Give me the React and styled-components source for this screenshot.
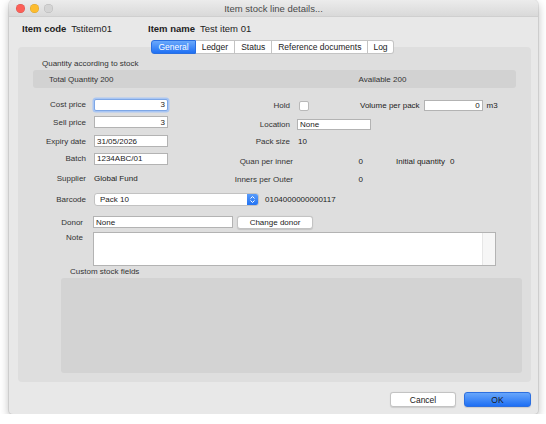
import React from "react";
import styled, { createGlobalStyle } from "styled-components";

const GlobalStyle = createGlobalStyle`
  html, body {
    margin: 0;
    padding: 0;
    background: #ffffff;
    font-family: "Liberation Sans", Arial, sans-serif;
    color: #222;
  }
`;

const Window = styled.div`
  margin-left: 9px;
  width: 529px;
  height: 414px;
  background: #e8e8e8;
  border-radius: 5px 5px 4px 4px;
  box-shadow: 0 4px 10px rgba(0, 0, 0, 0.28), 0 0 0 1px rgba(0, 0, 0, 0.08);
  display: flex;
  flex-direction: column;
  overflow: hidden;
`;

const TitleBar = styled.div`
  height: 17px;
  display: flex;
  align-items: center;
  padding-left: 7px;
  background: linear-gradient(#ececec, #d9d9d9);
  border-bottom: 1px solid #cfcfcf;
  box-sizing: border-box;
`;

const Light = styled.span`
  width: 9px;
  height: 9px;
  border-radius: 50%;
  margin-right: 5px;
  background: ${({ color }) => color};
  box-shadow: inset 0 0 0 0.5px rgba(0, 0, 0, 0.15);
`;

const Title = styled.div`
  flex: 1;
  text-align: center;
  font-size: 9.5px;
  color: #4a4a4a;
  margin-right: 49px;
`;

const Header = styled.div`
  height: 23px;
  display: flex;
  align-items: center;
  padding-left: 13px;
  font-size: 9.5px;
`;

const HeadLabel = styled.span`
  font-weight: bold;
  margin-right: 5px;
  margin-left: ${({ $ml }) => $ml || 0}px;
`;

const Panel = styled.div`
  margin: 7px 7px 0 9px;
  height: 335px;
  background: #dedede;
  border-radius: 4px;
  display: flex;
  flex-direction: column;
  font-size: 8px;
`;

const TabBar = styled.div`
  margin-top: -7px;
  display: flex;
  justify-content: center;
  padding-right: 4px;
`;

const Tab = styled.div`
  height: 14px;
  padding: 0 ${({ $pad }) => $pad}px;
  display: flex;
  align-items: center;
  font-size: 8.5px;
  color: ${({ $active }) => ($active ? "#ffffff" : "#222")};
  background: ${({ $active }) =>
    $active ? "linear-gradient(#6aa9fb, #1f70f4)" : "#ffffff"};
  border: 1px solid ${({ $active }) => ($active ? "#2a6fe0" : "#c4c4c4")};
  border-left-width: ${({ $first }) => ($first ? 1 : 0)}px;
  box-sizing: border-box;
  &:first-child {
    border-radius: 3px 0 0 3px;
  }
  &:last-child {
    border-radius: 0 3px 3px 0;
  }
`;

const SectionLabel = styled.div`
  height: 10px;
  line-height: 10px;
  margin: ${({ $mt }) => $mt}px 0 0 ${({ $ml }) => $ml}px;
  color: #333;
`;

const QtyBar = styled.div`
  margin: 1px 15px 0 15px;
  height: 18px;
  background: #d2d2d2;
  border-radius: 3px;
  display: flex;
  align-items: center;
  padding-left: 16px;
  color: #333;
`;

const Available = styled.span`
  margin-left: 245px;
`;

const FormTop = styled.div`
  display: flex;
  margin-top: 10px;
`;

const Column = styled.div`
  display: flex;
  flex-direction: column;
  padding-top: ${({ $pt }) => $pt || 0}px;
`;

const Row = styled.div`
  display: flex;
  align-items: ${({ $top }) => ($top ? "flex-start" : "center")};
  margin-top: ${({ $mt }) => $mt || 0}px;
  height: ${({ $h }) => $h || 13}px;
`;

const Label = styled.span`
  width: ${({ $w }) => $w}px;
  text-align: right;
  margin-right: ${({ $gap }) => $gap || 8}px;
  color: #333;
  flex-shrink: 0;
  padding-top: ${({ $pt }) => $pt || 0}px;
`;

const Value = styled.span`
  color: #222;
  margin-left: ${({ $ml }) => $ml || 0}px;
  width: ${({ $w }) => ($w ? `${$w}px` : "auto")};
  text-align: ${({ $right }) => ($right ? "right" : "left")};
`;

const Input = styled.div`
  width: ${({ $w }) => $w}px;
  height: ${({ $h }) => $h || 12}px;
  box-sizing: border-box;
  background: #ffffff;
  border: 1px solid ${({ $focus }) => ($focus ? "#7ea7e6" : "#b3b3b3")};
  box-shadow: ${({ $focus }) => ($focus ? "0 0 0 1.5px #a9c6f3" : "none")};
  border-radius: ${({ $focus }) => ($focus ? 2 : 0)}px;
  display: flex;
  align-items: center;
  justify-content: ${({ $right }) => ($right ? "flex-end" : "flex-start")};
  padding: 0 2px;
  color: #1a1a1a;
  margin-left: ${({ $ml }) => $ml || 0}px;
`;

const Check = styled.div`
  width: 10px;
  height: 10px;
  box-sizing: border-box;
  background: #fff;
  border: 1px solid #b9b9b9;
  border-radius: 2px;
  margin-left: 2px;
`;

const Select = styled.div`
  width: 165px;
  height: 13px;
  box-sizing: border-box;
  background: #ffffff;
  border: 1px solid #c2c2c2;
  border-radius: 3px;
  display: flex;
  align-items: center;
  padding-left: 5px;
  overflow: hidden;
`;

const SelectText = styled.span`
  flex: 1;
`;

const Stepper = styled.div`
  width: 11px;
  height: 13px;
  background: linear-gradient(#5e9ffa, #1d6ff3);
  display: flex;
  align-items: center;
  justify-content: center;
`;

const Button = styled.div`
  width: ${({ $w }) => $w}px;
  height: ${({ $h }) => $h || 13}px;
  box-sizing: border-box;
  display: flex;
  align-items: center;
  justify-content: center;
  border-radius: 3px;
  color: #1a1a1a;
  background: ${({ $primary }) =>
    $primary ? "linear-gradient(#67a6fb, #1e6ff4)" : "#ffffff"};
  border: 1px solid ${({ $primary }) => ($primary ? "#2c6fe0" : "#c3c3c3")};
  box-shadow: 0 0.5px 1px rgba(0, 0, 0, 0.12);
  margin-left: ${({ $ml }) => $ml || 0}px;
  font-size: ${({ $fs }) => $fs || 8}px;
`;

const NoteBox = styled.div`
  width: 403px;
  height: 34px;
  box-sizing: border-box;
  background: #fff;
  border: 1px solid #b3b3b3;
  display: flex;
  justify-content: flex-end;
`;

const ScrollTrack = styled.div`
  width: 12px;
  background: #f6f6f6;
  border-left: 1px solid #e6e6e6;
`;

const CustomBox = styled.div`
  margin: 1px 9px 0 43px;
  height: 95px;
  background: #d3d3d3;
  border-radius: 3px;
`;

const Footer = styled.div`
  display: flex;
  justify-content: flex-end;
  padding: 10px 7px 0 0;
`;

const StepperIcon = () => (
  <svg width="7" height="9" viewBox="0 0 7 9">
    <path d="M1.5 3.5 L3.5 1.5 L5.5 3.5" fill="none" stroke="#fff" strokeWidth="1" />
    <path d="M1.5 5.5 L3.5 7.5 L5.5 5.5" fill="none" stroke="#fff" strokeWidth="1" />
  </svg>
);

const tabs = [
  { name: "General", pad: 6, active: true },
  { name: "Ledger", pad: 6 },
  { name: "Status", pad: 6 },
  { name: "Reference documents", pad: 6 },
  { name: "Log", pad: 5 },
];

const App = () => {
  return (
    <>
      <GlobalStyle />
      <Window>
        <TitleBar>
          <Light color="#fc5f57" />
          <Light color="#fdbc2e" />
          <Light color="#d4d4d4" />
          <Title>Item stock line details...</Title>
        </TitleBar>
        <Header>
          <HeadLabel>Item code</HeadLabel>
          <span>Tstitem01</span>
          <HeadLabel $ml={36}>Item name</HeadLabel>
          <span>Test item 01</span>
        </Header>
        <Panel>
          <TabBar>
            {tabs.map((tab, i) => (
              <Tab key={tab.name} $active={tab.active} $pad={tab.pad} $first={i === 0}>
                {tab.name}
              </Tab>
            ))}
          </TabBar>
          <SectionLabel $mt={5} $ml={24}>
            Quantity according to stock
          </SectionLabel>
          <QtyBar>
            <span>Total Quantity 200</span>
            <Available>Available 200</Available>
          </QtyBar>
          <FormTop>
            <Column>
              <Row>
                <Label $w={68}>Cost price</Label>
                <Input $w={74} $h={12} $right $focus>3</Input>
              </Row>
              <Row $mt={4.5}>
                <Label $w={68}>Sell price</Label>
                <Input $w={74} $right>3</Input>
              </Row>
              <Row $mt={6}>
                <Label $w={68}>Expiry date</Label>
                <Input $w={74}>31/05/2026</Input>
              </Row>
              <Row $mt={4.5}>
                <Label $w={68}>Batch</Label>
                <Input $w={74}>1234ABC/01</Input>
              </Row>
              <Row $mt={6.5}>
                <Label $w={68}>Supplier</Label>
                <Value>Global Fund</Value>
              </Row>
            </Column>
            <Column $pt={1}>
              <Row>
                <Label $w={122} $gap={7}>Hold</Label>
                <Check />
                <Value $ml={51}>Volume per pack</Value>
                <Input $w={59} $h={11} $right $ml={4}>0</Input>
                <Value $ml={4}>m3</Value>
              </Row>
              <Row $mt={5.5}>
                <Label $w={122} $gap={7}>Location</Label>
                <Input $w={74} $h={11}>None</Input>
              </Row>
              <Row $mt={4}>
                <Label $w={122} $gap={7}>Pack size</Label>
                <Value $ml={1}>10</Value>
              </Row>
              <Row $mt={7}>
                <Label $w={125} $gap={4}>Quan per inner</Label>
                <Value $w={66} $right>0</Value>
                <Value $ml={33}>Initial quantity</Value>
                <Value $ml={5}>0</Value>
              </Row>
              <Row $mt={5}>
                <Label $w={125} $gap={4}>Inners per Outer</Label>
                <Value $w={66} $right>0</Value>
              </Row>
            </Column>
          </FormTop>
          <Row $mt={7.5}>
            <Label $w={68}>Barcode</Label>
            <Select>
              <SelectText>Pack 10</SelectText>
              <Stepper>
                <StepperIcon />
              </Stepper>
            </Select>
            <Value $ml={6}>0104000000000117</Value>
          </Row>
          <Row $mt={9.5}>
            <Label $w={65} $gap={10}>Donor</Label>
            <Input $w={140}>None</Input>
            <Button $w={76} $ml={4}>Change donor</Button>
          </Row>
          <Row $mt={3} $h={34} $top>
            <Label $w={65} $gap={10} $pt={1}>Note</Label>
            <NoteBox>
              <ScrollTrack />
            </NoteBox>
          </Row>
          <SectionLabel $mt={1} $ml={52}>
            Custom stock fields
          </SectionLabel>
          <CustomBox />
        </Panel>
        <Footer>
          <Button $w={66} $h={15} $fs={8.5}>Cancel</Button>
          <Button $w={67} $h={15} $fs={8.5} $primary $ml={8}>OK</Button>
        </Footer>
      </Window>
    </>
  );
};

export default App;
